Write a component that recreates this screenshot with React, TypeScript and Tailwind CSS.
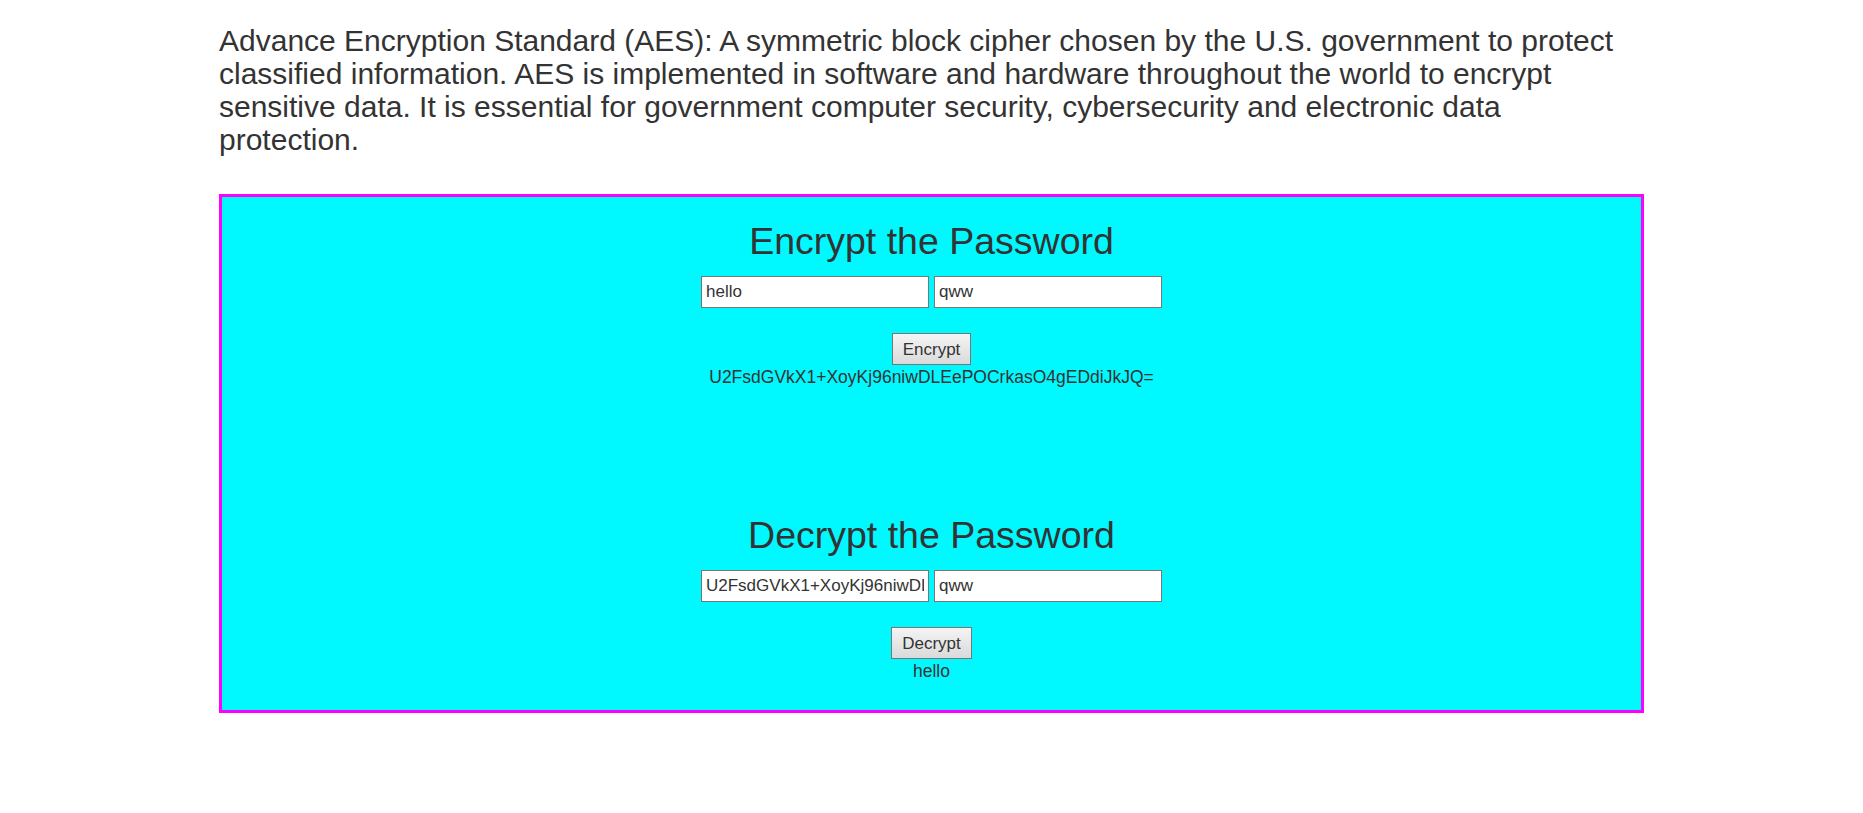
import { useState } from "react";

const cipherText = "U2FsdGVkX1+XoyKj96niwDLEePOCrkasO4gEDdiJkJQ=";

const field =
  "w-[228px] h-[32px] border border-[#767676] bg-white px-[4px] text-[17px] text-[#333] outline-none";
const button =
  "h-[32px] px-[10px] border border-[#767676] bg-gradient-to-b from-[#f4f4f4] to-[#dadada] text-[17px] text-[#333] leading-none";

function CipherPanel({
  title,
  text,
  secret,
  action,
  result,
}: {
  title: string;
  text: string;
  secret: string;
  action: string;
  result: string;
}) {
  const [value, setValue] = useState(text);
  const [key, setKey] = useState(secret);

  return (
    <div className="flex flex-col items-center">
      <h2 className="text-[37.5px] leading-[43px] text-[#333]">{title}</h2>
      <div className="mt-[13px] flex gap-[5px]">
        <input
          className={field}
          value={value}
          onChange={(e) => setValue(e.target.value)}
        />
        <input
          className={field}
          value={key}
          onChange={(e) => setKey(e.target.value)}
        />
      </div>
      <button className={`mt-[25px] ${button}`}>{action}</button>
      <div className="mt-[3px] text-[17.5px] leading-[19px] text-[#333]">
        {result}
      </div>
    </div>
  );
}

export default function App() {
  return (
    <div className="min-h-screen bg-white font-['Liberation_Sans',Arial,sans-serif]">
      <div className="mx-auto w-[1425px] pt-[24px]">
        <p className="text-[30px] leading-[33px] text-[#333]">
          Advance Encryption Standard (AES): A symmetric block cipher chosen by
          the U.S. government to protect classified information. AES is
          implemented in software and hardware throughout the world to encrypt
          sensitive data. It is essential for government computer security,
          cybersecurity and electronic data protection.
        </p>

        <div className="mt-[38px] border-[3px] border-[#ff00ff] bg-[#00f8ff] pt-[23px] pb-[29px]">
          <CipherPanel
            title="Encrypt the Password"
            text="hello"
            secret="qww"
            action="Encrypt"
            result={cipherText}
          />
          <div className="h-[127px]" />
          <CipherPanel
            title="Decrypt the Password"
            text={cipherText}
            secret="qww"
            action="Decrypt"
            result="hello"
          />
        </div>
      </div>
    </div>
  );
}
